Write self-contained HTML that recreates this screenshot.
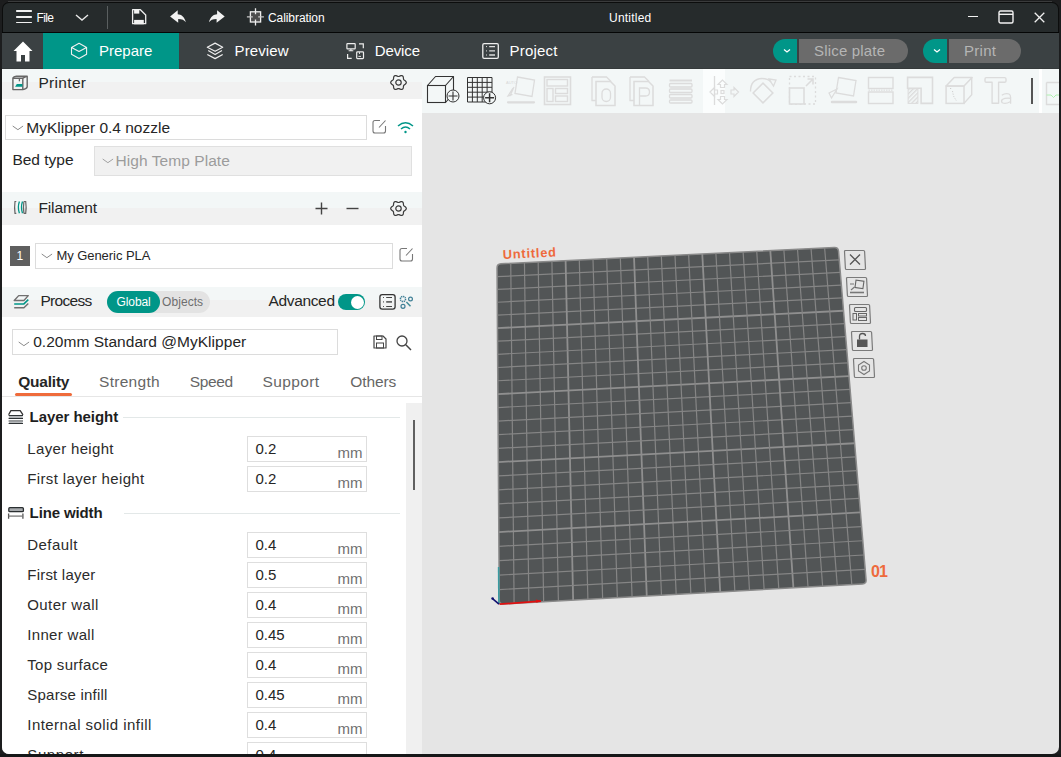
<!DOCTYPE html><html><head><meta charset="utf-8"><style>
html,body{margin:0;padding:0;width:1061px;height:757px;overflow:hidden;background:#1d1e1f;}
.t{position:absolute;white-space:nowrap;font-family:"Liberation Sans",sans-serif;}
.r{position:absolute;}
</style></head><body>
<div class="r" style="left:0.00px;top:0.00px;width:1061.00px;height:2.00px;background:#1c1d1e;"></div>
<div class="r" style="left:0.00px;top:754.00px;width:1061.00px;height:3.00px;background:#1c1d1e;"></div>
<div class="r" style="left:0.00px;top:0.00px;width:2.00px;height:757.00px;background:#1c1d1e;"></div>
<div class="r" style="left:1059.00px;top:0.00px;width:2.00px;height:757.00px;background:#1c1d1e;"></div>
<div class="r" style="left:2.00px;top:2.00px;width:1057.00px;height:752.00px;background:#0c0d0d;border-radius:7px;"></div>
<div class="r" style="left:2.00px;top:33.00px;width:1057.00px;height:721.00px;background:#e5e5e5;border-radius:0 0 7px 7px;"></div>
<div class="r" style="left:8.00px;top:1.00px;width:1044.00px;height:1.00px;background:#3a3b3c;"></div>
<div class="r" style="left:3.00px;top:3.00px;width:1055.00px;height:29.00px;background:#262b2c;border-radius:6px 6px 0 0;"></div>
<div class="r" style="left:2.00px;top:31.50px;width:1057.00px;height:1.50px;background:#050606;"></div>
<div class="r" style="left:2.00px;top:33.00px;width:1057.00px;height:36.00px;background:#3b4143;"></div>
<div class="r" style="left:2.00px;top:68.00px;width:1057.00px;height:1.00px;background:#353a3b;"></div>
<div class="r" style="left:16.00px;top:10.25px;width:16.00px;height:1.50px;background:#f0f0f0;border-radius:0.75px;"></div>
<div class="r" style="left:16.00px;top:16.25px;width:16.00px;height:1.50px;background:#f0f0f0;border-radius:0.75px;"></div>
<div class="r" style="left:16.00px;top:21.75px;width:16.00px;height:1.50px;background:#f0f0f0;border-radius:0.75px;"></div>
<div class="t" style="left:36.50px;top:11.84px;font-size:12.00px;line-height:12.00px;color:#ffffff;font-weight:400;letter-spacing:-0.612px;">File</div>
<svg class="r" style="left:75px;top:14px;" width="14" height="8" viewBox="0 0 14 8"><path d="M1 1 L7 6 L13 1" fill="none" stroke="#e8e8e8" stroke-width="1.4"/></svg>
<div class="r" style="left:107.00px;top:6.00px;width:1.00px;height:23.00px;background:#5a5f60;"></div>
<svg class="r" style="left:128px;top:6px" width="22" height="22" viewBox="128 6 22 22"><path d="M132.6 9.7 H140.4 L145.7 15 V23.7 H132.6 Z" fill="none" stroke="#eeeeee" stroke-width="1.3" stroke-linejoin="round"/><rect x="134.1" y="9.8" width="5.2" height="3.8" fill="#f2f2f2"/><rect x="134.1" y="19.9" width="9.7" height="4.4" fill="#f2f2f2"/></svg>
<svg class="r" style="left:168px;top:8px" width="20" height="17" viewBox="168 8 20 17"><path d="M170.1 16.6 L177.7 10.2 V14.2 C181 14.4 184.6 16.5 185.8 22.3 C184.5 20.2 182 19 178.2 19 V22.8 Z" fill="#f2f2f2"/></svg>
<svg class="r" style="left:206px;top:8px" width="20" height="17" viewBox="206 8 20 17"><path d="M224.7 16.6 L217.1 10.2 V14.2 C213.8 14.4 210.2 16.5 209 22.3 C210.3 20.2 212.8 19 216.6 19 V22.8 Z" fill="#f2f2f2"/></svg>
<svg class="r" style="left:245px;top:6px" width="22" height="22" viewBox="245 6 22 22"><rect x="250.4" y="11.8" width="10.2" height="10.2" fill="#4d4d4d" stroke="#eeeeee" stroke-width="1.3"/><path d="M255.5 8.3 V14.2 M255.5 19.6 V25.6" stroke="#eeeeee" stroke-width="1.3"/><path d="M246.9 16.9 H252.8 M258.2 16.9 H263.9" stroke="#c8c8c8" stroke-width="1.3"/></svg>
<div class="t" style="left:268.00px;top:11.84px;font-size:12.00px;line-height:12.00px;color:#ffffff;font-weight:400;letter-spacing:-0.076px;">Calibration</div>
<div class="t" style="left:609.00px;top:11.84px;font-size:12.00px;line-height:12.00px;color:#ffffff;font-weight:400;letter-spacing:0.216px;">Untitled</div>
<div class="r" style="left:968.00px;top:15.50px;width:10.00px;height:1.50px;background:#f2f2f2;"></div>
<svg class="r" style="left:998px;top:10px;" width="16" height="14" viewBox="0 0 16 14"><rect x="1" y="1" width="14" height="12" rx="1.5" fill="none" stroke="#f2f2f2" stroke-width="1.4"/><path d="M1 4.3 H15" stroke="#f2f2f2" stroke-width="1.4"/></svg>
<svg class="r" style="left:1034px;top:12px;" width="11" height="11" viewBox="0 0 11 11"><path d="M0.7 0.7 L10.3 10.3 M10.3 0.7 L0.7 10.3" stroke="#f0f0f0" stroke-width="1.3"/></svg>
<div class="r" style="left:43.00px;top:33.00px;width:136.00px;height:36.00px;background:#009688;"></div>
<svg class="r" style="left:13px;top:41px;" width="20" height="21" viewBox="0 0 20 21"><path d="M10 0.5 L19.5 10 H16.5 V20.5 H12 V14 H8 V20.5 H3.5 V10 H0.5 Z" fill="#ffffff"/></svg>
<svg class="r" style="left:68px;top:40px" width="22" height="22" viewBox="68 40 22 22"><path d="M79.05 43.3 L86.6 47.5 V54.25 L79.05 58.6 L71.5 54.25 V47.5 Z M71.5 47.5 L79.05 51.5 L86.6 47.5" fill="none" stroke="#f0f0f0" stroke-width="1.1" stroke-linejoin="round"/></svg>
<div class="t" style="left:99.00px;top:43.00px;font-size:15.00px;line-height:15.00px;color:#ffffff;font-weight:400;letter-spacing:-0.010px;">Prepare</div>
<svg class="r" style="left:204px;top:40px" width="22" height="22" viewBox="204 40 22 22"><path d="M215.1 43.1 L222.7 47.3 L215.1 51.3 L207.3 47.3 Z" fill="none" stroke="#eeeeee" stroke-width="1.2" stroke-linejoin="round"/><path d="M208.2 50.6 L215.1 54.6 L222 50.6 M207.3 54.5 L215.1 58.6 L222.7 54.5" fill="none" stroke="#eeeeee" stroke-width="1.2" stroke-linejoin="round"/></svg>
<div class="t" style="left:234.60px;top:43.20px;font-size:15.00px;line-height:15.00px;color:#ffffff;font-weight:400;letter-spacing:0.109px;">Preview</div>
<svg class="r" style="left:343px;top:40px" width="24" height="22" viewBox="343 40 24 22"><rect x="346.9" y="43.7" width="8.3" height="5.2" rx="0.6" fill="none" stroke="#eeeeee" stroke-width="1.2"/><path d="M350.9 49 V50.4 M348.6 50.7 H353.3" stroke="#eeeeee" stroke-width="1.1"/><path d="M359 43.8 H363.3 V48.2 M347.6 53.9 V58.4 H351.7" fill="none" stroke="#eeeeee" stroke-width="1.2"/><rect x="356.7" y="51.8" width="6.8" height="6.8" rx="0.8" fill="none" stroke="#eeeeee" stroke-width="1.2"/><path d="M359.5 52 V54 M358.4 56.4 H361" stroke="#dddddd" stroke-width="1"/></svg>
<div class="t" style="left:374.80px;top:43.20px;font-size:15.00px;line-height:15.00px;color:#ffffff;font-weight:400;letter-spacing:-0.130px;">Device</div>
<svg class="r" style="left:479px;top:40px" width="22" height="22" viewBox="479 40 22 22"><rect x="482.8" y="43.7" width="15.5" height="14.7" rx="1.3" fill="none" stroke="#eeeeee" stroke-width="1.3"/><path d="M489.2 46.6 H495 M489.2 50.9 H495 M489.2 55 H495" stroke="#dddddd" stroke-width="1.3"/><path d="M486.5 46.1 V47.1 M486.5 50.4 V51.4 M486.5 54.5 V55.5" stroke="#dddddd" stroke-width="1"/></svg>
<div class="t" style="left:509.50px;top:43.20px;font-size:15.00px;line-height:15.00px;color:#ffffff;font-weight:400;letter-spacing:0.203px;">Project</div>
<div class="r" style="left:773.00px;top:39.00px;width:24.00px;height:24.00px;background:#009688;border-radius:12px 0 0 12px;"></div>
<svg class="r" style="left:782px;top:47px;" width="10" height="8" viewBox="0 0 10 8"><path d="M2 2.5 L5 5 L8 2.5" fill="none" stroke="#ffffff" stroke-width="1.3"/></svg>
<div class="r" style="left:799.00px;top:39.00px;width:109.00px;height:24.00px;background:#6b6b6b;border-radius:0 12px 12px 0;"></div>
<div class="t" style="left:814.00px;top:43.30px;font-size:15.00px;line-height:15.00px;color:#b5b5b5;font-weight:400;letter-spacing:0.180px;">Slice plate</div>
<div class="r" style="left:923.00px;top:39.00px;width:24.00px;height:24.00px;background:#009688;border-radius:12px 0 0 12px;"></div>
<svg class="r" style="left:932px;top:47px;" width="10" height="8" viewBox="0 0 10 8"><path d="M2 2.5 L5 5 L8 2.5" fill="none" stroke="#ffffff" stroke-width="1.3"/></svg>
<div class="r" style="left:949.00px;top:39.00px;width:72.00px;height:24.00px;background:#6b6b6b;border-radius:0 12px 12px 0;"></div>
<div class="t" style="left:964.00px;top:43.30px;font-size:15.00px;line-height:15.00px;color:#b5b5b5;font-weight:400;letter-spacing:0.290px;">Print</div>
<div class="r" style="left:2.00px;top:69.00px;width:420.00px;height:685.00px;background:#ffffff;border-radius:0 0 0 7px;"></div>
<div class="r" style="left:2.00px;top:69.00px;width:420.00px;height:13.00px;background:#f3f7f7;"></div>
<div class="r" style="left:2.00px;top:82.00px;width:420.00px;height:17.00px;background:#f1f1f1;"></div>
<svg class="r" style="left:9px;top:72px" width="24" height="22" viewBox="9 72 24 22"><path d="M12.9 78.2 H22.8 V89.6 H12.9 Z" fill="none" stroke="#666" stroke-width="1.4" stroke-linejoin="round"/><path d="M12.9 78.2 Q13.5 76.3 16.3 76.2 H27.2 V86.8 Q26.8 88.8 22.8 89.6 M22.8 78.2 L27.2 76.2" fill="none" stroke="#666" stroke-width="1.4" stroke-linejoin="round"/><path d="M19.4 79 V81.3" stroke="#666" stroke-width="1.3"/><path d="M15.1 86.8 L16.8 84.1 H22.4 V86.8 Z" fill="#009688"/></svg>
<div class="t" style="left:38.40px;top:75.08px;font-size:15.50px;line-height:15.50px;color:#262626;font-weight:400;letter-spacing:0.325px;">Printer</div>
<svg class="r" style="left:390.4px;top:74.4px;" width="17" height="17" viewBox="0 0 17 17"><path d="M16.30 8.50 L16.15 7.83 L15.74 7.22 L15.16 6.71 L14.56 6.29 L14.05 5.91 L13.70 5.50 L13.51 4.99 L13.44 4.35 L13.38 3.62 L13.22 2.87 L12.90 2.21 L12.40 1.75 L11.75 1.54 L11.01 1.59 L10.29 1.84 L9.62 2.15 L9.03 2.40 L8.50 2.50 L7.97 2.40 L7.38 2.15 L6.71 1.84 L5.99 1.59 L5.25 1.54 L4.60 1.75 L4.10 2.21 L3.78 2.87 L3.62 3.62 L3.56 4.35 L3.49 4.99 L3.30 5.50 L2.95 5.91 L2.44 6.29 L1.84 6.71 L1.26 7.22 L0.85 7.83 L0.70 8.50 L0.85 9.17 L1.26 9.78 L1.84 10.29 L2.44 10.71 L2.95 11.09 L3.30 11.50 L3.49 12.01 L3.56 12.65 L3.62 13.38 L3.78 14.13 L4.10 14.79 L4.60 15.25 L5.25 15.46 L5.99 15.41 L6.71 15.16 L7.38 14.85 L7.97 14.60 L8.50 14.50 L9.03 14.60 L9.62 14.85 L10.29 15.16 L11.01 15.41 L11.75 15.46 L12.40 15.25 L12.90 14.79 L13.22 14.13 L13.38 13.38 L13.44 12.65 L13.51 12.01 L13.70 11.50 L14.05 11.09 L14.56 10.71 L15.16 10.29 L15.74 9.78 L16.15 9.17 L16.30 8.50 Z" fill="none" stroke="#3a3a3a" stroke-width="1.2" stroke-linejoin="round"/><circle cx="8.5" cy="8.5" r="2.7" fill="none" stroke="#3a3a3a" stroke-width="1.2"/></svg>
<div class="r" style="left:5.00px;top:115.00px;width:362.00px;height:25.00px;background:#ffffff;border:1px solid #dcdcdc;box-sizing:border-box;"></div>
<svg class="r" style="left:12px;top:125px;" width="12" height="6" viewBox="0 0 12 6"><path d="M0.7 1 L5.9 4.7 L11.1 1" fill="none" stroke="#8a8a8a" stroke-width="1"/></svg>
<div class="t" style="left:26.30px;top:120.28px;font-size:15.50px;line-height:15.50px;color:#262626;font-weight:400;letter-spacing:-0.009px;">MyKlipper 0.4 nozzle</div>
<svg class="r" style="left:372px;top:119.2px;" width="15" height="15" viewBox="0 0 15 15"><path d="M8 1.5 H3 Q1 1.5 1 3.5 V12 Q1 14 3 14 H11.5 Q13.5 14 13.5 12 V7" fill="none" stroke="#777" stroke-width="1.1"/><path d="M7 8.5 L13.5 1.5" stroke="#777" stroke-width="1.1"/></svg>
<svg class="r" style="left:397px;top:121px;" width="17" height="13" viewBox="0 0 17 13"><path d="M1 5 Q8.5 -1.5 16 5" fill="none" stroke="#009688" stroke-width="1.5"/><path d="M4 8 Q8.5 4 13 8" fill="none" stroke="#009688" stroke-width="1.5"/><circle cx="8.5" cy="11" r="1.2" fill="#009688"/></svg>
<div class="t" style="left:12.40px;top:151.88px;font-size:15.50px;line-height:15.50px;color:#262626;font-weight:400;letter-spacing:0.003px;">Bed type</div>
<div class="r" style="left:94.00px;top:146.00px;width:318.00px;height:30.00px;background:#f1f1f1;border:1px solid #e0e0e0;box-sizing:border-box;"></div>
<svg class="r" style="left:101.5px;top:158.3px;" width="12" height="6" viewBox="0 0 12 6"><path d="M0.7 1 L5.9 4.7 L11.1 1" fill="none" stroke="#a0a0a0" stroke-width="1"/></svg>
<div class="t" style="left:115.50px;top:153.08px;font-size:15.50px;line-height:15.50px;color:#9c9c9c;font-weight:400;letter-spacing:0.062px;">High Temp Plate</div>
<div class="r" style="left:2.00px;top:192.00px;width:420.00px;height:16.00px;background:#f3f7f7;"></div>
<div class="r" style="left:2.00px;top:208.00px;width:420.00px;height:17.00px;background:#f1f1f1;"></div>
<svg class="r" style="left:10px;top:198px" width="20" height="20" viewBox="10 198 20 20"><path d="M16.3 201.5 H15 Q14.2 207.5 15 213.3 H16.3 M23.9 201.5 H25.7 Q26.6 207.5 25.7 213.3 H23.9 M23.9 201.5 Q23 207.5 23.9 213.3" fill="none" stroke="#666" stroke-width="1.2"/><path d="M19.4 201.5 Q17.3 207.5 19.4 213.3 M22.5 201.5 Q20.4 207.5 22.5 213.3" fill="none" stroke="#009688" stroke-width="1.3"/></svg>
<div class="t" style="left:38.40px;top:200.38px;font-size:15.50px;line-height:15.50px;color:#262626;font-weight:400;letter-spacing:-0.119px;">Filament</div>
<svg class="r" style="left:315px;top:202px;" width="13" height="13" viewBox="0 0 13 13"><path d="M6.5 0.5 V12.5 M0.5 6.5 H12.5" stroke="#444" stroke-width="1.4"/></svg>
<svg class="r" style="left:346px;top:202px;" width="13" height="13" viewBox="0 0 13 13"><path d="M0.5 6.5 H12.5" stroke="#444" stroke-width="1.4"/></svg>
<svg class="r" style="left:390px;top:200px;" width="17" height="17" viewBox="0 0 17 17"><path d="M16.30 8.50 L16.15 7.83 L15.74 7.22 L15.16 6.71 L14.56 6.29 L14.05 5.91 L13.70 5.50 L13.51 4.99 L13.44 4.35 L13.38 3.62 L13.22 2.87 L12.90 2.21 L12.40 1.75 L11.75 1.54 L11.01 1.59 L10.29 1.84 L9.62 2.15 L9.03 2.40 L8.50 2.50 L7.97 2.40 L7.38 2.15 L6.71 1.84 L5.99 1.59 L5.25 1.54 L4.60 1.75 L4.10 2.21 L3.78 2.87 L3.62 3.62 L3.56 4.35 L3.49 4.99 L3.30 5.50 L2.95 5.91 L2.44 6.29 L1.84 6.71 L1.26 7.22 L0.85 7.83 L0.70 8.50 L0.85 9.17 L1.26 9.78 L1.84 10.29 L2.44 10.71 L2.95 11.09 L3.30 11.50 L3.49 12.01 L3.56 12.65 L3.62 13.38 L3.78 14.13 L4.10 14.79 L4.60 15.25 L5.25 15.46 L5.99 15.41 L6.71 15.16 L7.38 14.85 L7.97 14.60 L8.50 14.50 L9.03 14.60 L9.62 14.85 L10.29 15.16 L11.01 15.41 L11.75 15.46 L12.40 15.25 L12.90 14.79 L13.22 14.13 L13.38 13.38 L13.44 12.65 L13.51 12.01 L13.70 11.50 L14.05 11.09 L14.56 10.71 L15.16 10.29 L15.74 9.78 L16.15 9.17 L16.30 8.50 Z" fill="none" stroke="#3a3a3a" stroke-width="1.2" stroke-linejoin="round"/><circle cx="8.5" cy="8.5" r="2.7" fill="none" stroke="#3a3a3a" stroke-width="1.2"/></svg>
<div class="r" style="left:10.00px;top:246.00px;width:20.00px;height:20.00px;background:#5f5f5f;"></div>
<div class="t" style="left:16.50px;top:250.34px;font-size:12.00px;line-height:12.00px;color:#ffffff;font-weight:400;">1</div>
<div class="r" style="left:35.00px;top:243.00px;width:358.00px;height:26.00px;background:#ffffff;border:1px solid #dcdcdc;box-sizing:border-box;"></div>
<svg class="r" style="left:41px;top:253px;" width="12" height="6" viewBox="0 0 12 6"><path d="M0.7 1 L5.9 4.7 L11.1 1" fill="none" stroke="#8a8a8a" stroke-width="1"/></svg>
<div class="t" style="left:56.40px;top:248.80px;font-size:13.00px;line-height:13.00px;color:#262626;font-weight:400;letter-spacing:-0.049px;">My Generic PLA</div>
<svg class="r" style="left:399px;top:247px;" width="15" height="15" viewBox="0 0 15 15"><path d="M8 1.5 H3 Q1 1.5 1 3.5 V12 Q1 14 3 14 H11.5 Q13.5 14 13.5 12 V7" fill="none" stroke="#777" stroke-width="1.1"/><path d="M7 8.5 L13.5 1.5" stroke="#777" stroke-width="1.1"/></svg>
<div class="r" style="left:2.00px;top:287.00px;width:420.00px;height:13.00px;background:#f3f7f7;"></div>
<div class="r" style="left:2.00px;top:300.00px;width:420.00px;height:17.00px;background:#f1f1f1;"></div>
<svg class="r" style="left:10px;top:290px" width="22" height="22" viewBox="10 290 22 22"><path d="M18.7 295.6 H28.3 L23.9 300.5 H14.2 Z" fill="none" stroke="#707070" stroke-width="1.4" stroke-linejoin="round"/><path d="M14.2 303.9 H23.9 L28.3 299.6" fill="none" stroke="#009688" stroke-width="1.5"/><path d="M14.2 307.8 H23.9 L28.3 303.6" fill="none" stroke="#707070" stroke-width="1.4"/></svg>
<div class="t" style="left:40.40px;top:292.78px;font-size:15.50px;line-height:15.50px;color:#262626;font-weight:400;letter-spacing:-0.681px;">Process</div>
<div class="r" style="left:107.00px;top:291.00px;width:103.00px;height:22.00px;background:#e3e3e3;border-radius:11px;"></div>
<div class="r" style="left:107.00px;top:291.00px;width:53.00px;height:22.00px;background:#009688;border-radius:11px;"></div>
<div class="t" style="left:116.50px;top:296.34px;font-size:12.00px;line-height:12.00px;color:#ffffff;font-weight:400;letter-spacing:-0.097px;">Global</div>
<div class="t" style="left:162.10px;top:296.34px;font-size:12.00px;line-height:12.00px;color:#6e6e6e;font-weight:400;letter-spacing:0.053px;">Objects</div>
<div class="t" style="left:268.60px;top:292.78px;font-size:15.50px;line-height:15.50px;color:#262626;font-weight:400;letter-spacing:-0.362px;">Advanced</div>
<div class="r" style="left:338.00px;top:294.00px;width:27.00px;height:16.00px;background:#009688;border-radius:8px;"></div>
<div class="r" style="left:351px;top:295.5px;width:13px;height:13px;border-radius:50%;background:#fff;"></div>
<svg class="r" style="left:376px;top:291px" width="24" height="22" viewBox="376 291 24 22"><rect x="379.9" y="294.7" width="15.2" height="14.4" rx="2.3" fill="none" stroke="#333" stroke-width="1.3"/><path d="M386.2 297.5 H392 M386.2 306.5 H392" stroke="#444" stroke-width="1"/><path d="M386.2 301.9 H392" stroke="#555" stroke-width="1.6"/><path d="M383.5 297 V298 M383.5 301.3 V302.5 M383.5 306 V307" stroke="#555" stroke-width="1"/></svg>
<svg class="r" style="left:398px;top:293px" width="16" height="17" viewBox="398 293 16 17"><circle cx="403" cy="299" r="2.6" fill="none" stroke="#3f7f96" stroke-width="1.5" stroke-dasharray="1.3 0.7"/><circle cx="410.5" cy="299" r="1.9" fill="none" stroke="#3f7f96" stroke-width="1.2"/><circle cx="403" cy="306.3" r="2" fill="none" stroke="#3f7f96" stroke-width="1.2"/><path d="M406.4 302.1 L410.5 306.3" stroke="#3f8a96" stroke-width="1.5"/></svg>
<div class="r" style="left:12.00px;top:329.00px;width:326.00px;height:26.00px;background:#ffffff;border:1px solid #dcdcdc;box-sizing:border-box;"></div>
<svg class="r" style="left:18px;top:340.5px;" width="12" height="6" viewBox="0 0 12 6"><path d="M0.7 1 L5.9 4.7 L11.1 1" fill="none" stroke="#8a8a8a" stroke-width="1"/></svg>
<div class="t" style="left:33.20px;top:334.38px;font-size:15.50px;line-height:15.50px;color:#262626;font-weight:400;letter-spacing:0.034px;">0.20mm Standard @MyKlipper</div>
<svg class="r" style="left:373px;top:335px;" width="14" height="14" viewBox="0 0 14 14"><path d="M1 1 H10 L13 4 V13 H1 Z" fill="none" stroke="#444" stroke-width="1.2" stroke-linejoin="round"/><rect x="3.5" y="1" width="5.5" height="3.5" fill="none" stroke="#444" stroke-width="1"/><rect x="3.5" y="8" width="7" height="5" fill="none" stroke="#444" stroke-width="1"/></svg>
<svg class="r" style="left:396px;top:335px;" width="16" height="16" viewBox="0 0 16 16"><circle cx="6" cy="6" r="5" fill="none" stroke="#444" stroke-width="1.3"/><path d="M9.8 9.8 L15 15" stroke="#444" stroke-width="1.5"/></svg>
<div class="t" style="left:18.20px;top:374.28px;font-size:15.50px;line-height:15.50px;color:#262626;font-weight:700;letter-spacing:-0.206px;">Quality</div>
<div class="r" style="left:15.00px;top:393.00px;width:57.00px;height:3.00px;background:#ef6b3b;border-radius:1.5px;"></div>
<div class="t" style="left:99.00px;top:373.58px;font-size:15.50px;line-height:15.50px;color:#666666;font-weight:400;letter-spacing:0.287px;">Strength</div>
<div class="t" style="left:189.70px;top:373.58px;font-size:15.50px;line-height:15.50px;color:#666666;font-weight:400;letter-spacing:-0.329px;">Speed</div>
<div class="t" style="left:262.60px;top:373.58px;font-size:15.50px;line-height:15.50px;color:#666666;font-weight:400;letter-spacing:0.353px;">Support</div>
<div class="t" style="left:350.30px;top:373.58px;font-size:15.50px;line-height:15.50px;color:#666666;font-weight:400;letter-spacing:-0.122px;">Others</div>
<div class="r" style="left:2.00px;top:396.00px;width:420.00px;height:1.00px;background:#e6e6e6;"></div>
<div class="r" style="left:406.00px;top:403.00px;width:16.00px;height:351.00px;background:#f0f0f0;"></div>
<div class="r" style="left:413.00px;top:420.00px;width:2.00px;height:70.00px;background:#606060;"></div>
<div class="t" style="left:29.60px;top:409.10px;font-size:15.00px;line-height:15.00px;color:#1e1e1e;font-weight:700;letter-spacing:-0.053px;">Layer height</div>
<svg class="r" style="left:5px;top:405.8px" width="22" height="20" viewBox="5 405.8 22 20"><path d="M8.6 414.6 L10.9 410.4 H20.2 L23 414.6" fill="none" stroke="#333" stroke-width="1.3" stroke-linejoin="round"/><path d="M8.6 415.3 H23 M8.6 418.1 H23 M8.6 420.8 H23 M8.6 423.3 H23" stroke="#2f3436" stroke-width="1.2"/><path d="M9 416.7 H22.6 M9 422 H22.6" stroke="#9ea2a5" stroke-width="1.2"/></svg>
<div class="r" style="left:123.00px;top:417.00px;width:277.00px;height:1.00px;background:#e3e8e8;"></div>
<div class="t" style="left:29.60px;top:505.10px;font-size:15.00px;line-height:15.00px;color:#1e1e1e;font-weight:700;letter-spacing:-0.128px;">Line width</div>
<svg class="r" style="left:5px;top:501.79999999999995px" width="22" height="20" viewBox="5 501.79999999999995 22 20"><rect x="8.8" y="507.5" width="14.6" height="4" rx="1" fill="#a7aaad" stroke="#2a2f31" stroke-width="1.3"/><path d="M8.6 513.4 V518.6 M22.9 513.4 V518.6" stroke="#555" stroke-width="1.3"/><path d="M8.6 515.9 H22.9" stroke="#7a7a7a" stroke-width="1.3"/></svg>
<div class="r" style="left:124.00px;top:513.00px;width:276.00px;height:1.00px;background:#e3e8e8;"></div>
<div class="t" style="left:27.30px;top:441.30px;font-size:15.00px;line-height:15.00px;color:#2b2b2b;font-weight:400;letter-spacing:0.332px;">Layer height</div>
<div class="r" style="left:247.00px;top:436.00px;width:120.00px;height:26.00px;background:#ffffff;border:1px solid #dedede;box-sizing:border-box;"></div>
<div class="t" style="left:255.50px;top:441.30px;font-size:15.00px;line-height:15.00px;color:#262626;font-weight:400;">0.2</div>
<div class="t" style="left:337.40px;top:445.30px;font-size:15.00px;line-height:15.00px;color:#707070;font-weight:400;letter-spacing:0.011px;">mm</div>
<div class="t" style="left:27.30px;top:471.30px;font-size:15.00px;line-height:15.00px;color:#2b2b2b;font-weight:400;letter-spacing:0.355px;">First layer height</div>
<div class="r" style="left:247.00px;top:466.00px;width:120.00px;height:26.00px;background:#ffffff;border:1px solid #dedede;box-sizing:border-box;"></div>
<div class="t" style="left:255.50px;top:471.30px;font-size:15.00px;line-height:15.00px;color:#262626;font-weight:400;">0.2</div>
<div class="t" style="left:337.40px;top:475.30px;font-size:15.00px;line-height:15.00px;color:#707070;font-weight:400;letter-spacing:0.011px;">mm</div>
<div class="t" style="left:27.30px;top:537.30px;font-size:15.00px;line-height:15.00px;color:#2b2b2b;font-weight:400;letter-spacing:0.413px;">Default</div>
<div class="r" style="left:247.00px;top:532.00px;width:120.00px;height:26.00px;background:#ffffff;border:1px solid #dedede;box-sizing:border-box;"></div>
<div class="t" style="left:255.50px;top:537.30px;font-size:15.00px;line-height:15.00px;color:#262626;font-weight:400;">0.4</div>
<div class="t" style="left:337.40px;top:541.30px;font-size:15.00px;line-height:15.00px;color:#707070;font-weight:400;letter-spacing:0.011px;">mm</div>
<div class="t" style="left:27.30px;top:567.30px;font-size:15.00px;line-height:15.00px;color:#2b2b2b;font-weight:400;letter-spacing:0.207px;">First layer</div>
<div class="r" style="left:247.00px;top:562.00px;width:120.00px;height:26.00px;background:#ffffff;border:1px solid #dedede;box-sizing:border-box;"></div>
<div class="t" style="left:255.50px;top:567.30px;font-size:15.00px;line-height:15.00px;color:#262626;font-weight:400;">0.5</div>
<div class="t" style="left:337.40px;top:571.30px;font-size:15.00px;line-height:15.00px;color:#707070;font-weight:400;letter-spacing:0.011px;">mm</div>
<div class="t" style="left:27.30px;top:597.30px;font-size:15.00px;line-height:15.00px;color:#2b2b2b;font-weight:400;letter-spacing:0.398px;">Outer wall</div>
<div class="r" style="left:247.00px;top:592.00px;width:120.00px;height:26.00px;background:#ffffff;border:1px solid #dedede;box-sizing:border-box;"></div>
<div class="t" style="left:255.50px;top:597.30px;font-size:15.00px;line-height:15.00px;color:#262626;font-weight:400;">0.4</div>
<div class="t" style="left:337.40px;top:601.30px;font-size:15.00px;line-height:15.00px;color:#707070;font-weight:400;letter-spacing:0.011px;">mm</div>
<div class="t" style="left:27.30px;top:627.30px;font-size:15.00px;line-height:15.00px;color:#2b2b2b;font-weight:400;letter-spacing:0.312px;">Inner wall</div>
<div class="r" style="left:247.00px;top:622.00px;width:120.00px;height:26.00px;background:#ffffff;border:1px solid #dedede;box-sizing:border-box;"></div>
<div class="t" style="left:255.50px;top:627.30px;font-size:15.00px;line-height:15.00px;color:#262626;font-weight:400;">0.45</div>
<div class="t" style="left:337.40px;top:631.30px;font-size:15.00px;line-height:15.00px;color:#707070;font-weight:400;letter-spacing:0.011px;">mm</div>
<div class="t" style="left:27.30px;top:657.30px;font-size:15.00px;line-height:15.00px;color:#2b2b2b;font-weight:400;letter-spacing:0.296px;">Top surface</div>
<div class="r" style="left:247.00px;top:652.00px;width:120.00px;height:26.00px;background:#ffffff;border:1px solid #dedede;box-sizing:border-box;"></div>
<div class="t" style="left:255.50px;top:657.30px;font-size:15.00px;line-height:15.00px;color:#262626;font-weight:400;">0.4</div>
<div class="t" style="left:337.40px;top:661.30px;font-size:15.00px;line-height:15.00px;color:#707070;font-weight:400;letter-spacing:0.011px;">mm</div>
<div class="t" style="left:27.30px;top:687.30px;font-size:15.00px;line-height:15.00px;color:#2b2b2b;font-weight:400;letter-spacing:0.214px;">Sparse infill</div>
<div class="r" style="left:247.00px;top:682.00px;width:120.00px;height:26.00px;background:#ffffff;border:1px solid #dedede;box-sizing:border-box;"></div>
<div class="t" style="left:255.50px;top:687.30px;font-size:15.00px;line-height:15.00px;color:#262626;font-weight:400;">0.45</div>
<div class="t" style="left:337.40px;top:691.30px;font-size:15.00px;line-height:15.00px;color:#707070;font-weight:400;letter-spacing:0.011px;">mm</div>
<div class="t" style="left:27.30px;top:717.30px;font-size:15.00px;line-height:15.00px;color:#2b2b2b;font-weight:400;letter-spacing:0.448px;">Internal solid infill</div>
<div class="r" style="left:247.00px;top:712.00px;width:120.00px;height:26.00px;background:#ffffff;border:1px solid #dedede;box-sizing:border-box;"></div>
<div class="t" style="left:255.50px;top:717.30px;font-size:15.00px;line-height:15.00px;color:#262626;font-weight:400;">0.4</div>
<div class="t" style="left:337.40px;top:721.30px;font-size:15.00px;line-height:15.00px;color:#707070;font-weight:400;letter-spacing:0.011px;">mm</div>
<div class="t" style="left:27.30px;top:747.30px;font-size:15.00px;line-height:15.00px;color:#2b2b2b;font-weight:400;letter-spacing:0.578px;">Support</div>
<div class="r" style="left:247.00px;top:742.00px;width:120.00px;height:26.00px;background:#ffffff;border:1px solid #dedede;box-sizing:border-box;"></div>
<div class="t" style="left:255.50px;top:747.30px;font-size:15.00px;line-height:15.00px;color:#262626;font-weight:400;">0.4</div>
<div class="t" style="left:337.40px;top:751.30px;font-size:15.00px;line-height:15.00px;color:#707070;font-weight:400;letter-spacing:0.011px;">mm</div>
<div class="r" style="left:422.00px;top:69.00px;width:617.00px;height:44.00px;background:#f3f7f7;"></div>
<div class="r" style="left:1039.00px;top:69.00px;width:3.00px;height:44.00px;background:#ffffff;"></div>
<div class="r" style="left:1042.00px;top:69.00px;width:17.00px;height:44.00px;background:#f3f7f7;"></div>
<div class="r" style="left:703.00px;top:69.00px;width:22.00px;height:44.00px;background:#fbfdfd;"></div>
<svg class="r" style="left:422px;top:72px" width="40" height="38" viewBox="422 72 40 38"><path d="M427.5 85.5 L435.5 76.5 H453.5 L445.5 85.5 Z" fill="none" stroke="#333" stroke-width="1.1" stroke-linejoin="round"/><rect x="427.5" y="85.5" width="18" height="17" fill="none" stroke="#333" stroke-width="1.1"/><path d="M445.5 102.5 L449 98.5 M453.5 76.5 V90" fill="none" stroke="#333" stroke-width="1.1"/><circle cx="453" cy="96" r="6" fill="#f3f7f7" stroke="#333" stroke-width="1"/><path d="M453 91.5 V100.5 M448.5 96 H457.5" stroke="#333" stroke-width="1.1"/></svg>
<svg class="r" style="left:462px;top:72px" width="38" height="38" viewBox="462 72 38 38"><path d="M467.5 77.5 V102" stroke="#333" stroke-width="1"/><path d="M472.4 77.5 V102" stroke="#333" stroke-width="1"/><path d="M477.3 77.5 V102" stroke="#333" stroke-width="1"/><path d="M482.2 77.5 V102" stroke="#333" stroke-width="1"/><path d="M487.1 77.5 V102" stroke="#333" stroke-width="1"/><path d="M492.0 77.5 V102" stroke="#333" stroke-width="1"/><path d="M467.5 77.5 H492" stroke="#333" stroke-width="1"/><path d="M467.5 82.4 H492" stroke="#333" stroke-width="1"/><path d="M467.5 87.3 H492" stroke="#333" stroke-width="1"/><path d="M467.5 92.2 H492" stroke="#333" stroke-width="1"/><path d="M467.5 97.1 H492" stroke="#333" stroke-width="1"/><path d="M467.5 102.0 H492" stroke="#333" stroke-width="1"/><circle cx="489.6" cy="97.8" r="6" fill="#f3f7f7" stroke="#333" stroke-width="1"/><path d="M489.6 93.3 V102.3 M485.1 97.8 H494.1" stroke="#333" stroke-width="1.5"/></svg>
<svg class="r" style="left:504px;top:74px;" width="34" height="34" viewBox="0 0 34 34"><path d="M13.5 3 L30.5 6 L28 22.5 L11 19.5 Z" fill="none" stroke="#dcdcdc" stroke-width="1.3"/><path d="M4 28.3 H30" stroke="#dcdcdc" stroke-width="2.2" stroke-linecap="round"/><path d="M9 14 L4 22 L8.5 20.5 M10 13 L6 22" fill="none" stroke="#dcdcdc" stroke-width="1.2"/><text x="2" y="10" font-size="4" fill="#d8d8d8" font-family="Liberation Sans">AUTO</text></svg>
<svg class="r" style="left:543px;top:75px;" width="30" height="32" viewBox="0 0 30 32"><rect x="1.5" y="2" width="26" height="27.5" fill="none" stroke="#dcdcdc" stroke-width="1.6"/><rect x="4" y="4.5" width="20.5" height="6.5" fill="none" stroke="#dcdcdc" stroke-width="1.4"/><rect x="4" y="13.5" width="6" height="13" fill="none" stroke="#dcdcdc" stroke-width="1.4"/><rect x="12.5" y="13.5" width="12" height="5" fill="none" stroke="#dcdcdc" stroke-width="1.4"/><rect x="12.5" y="21" width="12" height="5.5" fill="none" stroke="#dcdcdc" stroke-width="1.4"/></svg>
<svg class="r" style="left:591px;top:76px;" width="26" height="31" viewBox="0 0 26 31"><path d="M1 1 H15.5 L20 5.5" fill="none" stroke="#dcdcdc" stroke-width="1.3"/><path d="M1 1 V24.5 H5" fill="none" stroke="#dcdcdc" stroke-width="1.3"/><path d="M5 5.5 H19.5 L24 10 V29.5 H5 Z" fill="none" stroke="#dcdcdc" stroke-width="1.5"/><rect x="11" y="13" width="8.5" height="12.5" rx="4.2" fill="none" stroke="#dcdcdc" stroke-width="1.3"/></svg>
<svg class="r" style="left:629px;top:76px;" width="26" height="31" viewBox="0 0 26 31"><path d="M1 1 H15.5 L20 5.5" fill="none" stroke="#dcdcdc" stroke-width="1.3"/><path d="M1 1 V24.5 H5" fill="none" stroke="#dcdcdc" stroke-width="1.3"/><path d="M5 5.5 H19.5 L24 10 V29.5 H5 Z" fill="none" stroke="#dcdcdc" stroke-width="1.5"/><path d="M10.5 29 V12 H16.5 Q20.5 12 20.5 16 Q20.5 20 16.5 20 H10.5" fill="none" stroke="#dcdcdc" stroke-width="1.3"/></svg>
<svg class="r" style="left:668px;top:79px;" width="26" height="25" viewBox="0 0 26 25"><path d="M1.5 1.5 H24" stroke="#dcdcdc" stroke-width="2"/><rect x="1.5" y="4.5" width="22.5" height="3.5" rx="1" fill="none" stroke="#dcdcdc" stroke-width="1.3"/><rect x="1.5" y="10" width="22.5" height="3.5" rx="1" fill="none" stroke="#dcdcdc" stroke-width="1.3"/><rect x="1.5" y="15.5" width="22.5" height="3.5" rx="1" fill="none" stroke="#dcdcdc" stroke-width="1.3"/><rect x="1.5" y="21" width="22.5" height="3" rx="1" fill="none" stroke="#dcdcdc" stroke-width="1.3"/></svg>
<svg class="r" style="left:708px;top:74px;" width="33" height="33" viewBox="0 0 33 33"><path d="M6.5 2 V31" stroke="#dcdcdc" stroke-width="1.3"/><path d="M14.5 6 L10 10.5 H12.5 V13.5 H16.5 V10.5 H19 Z" fill="none" stroke="#dcdcdc" stroke-width="1.2"/><path d="M14.5 30 L10 25.5 H12.5 V22.5 H16.5 V25.5 H19 Z" fill="none" stroke="#dcdcdc" stroke-width="1.2"/><path d="M30.5 18 L26 13.5 V16 H23 V20 H26 V22.5 Z" fill="none" stroke="#dcdcdc" stroke-width="1.2"/><path d="M2 18 L6.5 13.5 V16 H9.5 V20 H6.5 V22.5 Z" fill="none" stroke="#dcdcdc" stroke-width="1.2"/><rect x="13" y="16.5" width="3" height="3" fill="none" stroke="#dcdcdc" stroke-width="1.2"/></svg>
<svg class="r" style="left:748px;top:76px;" width="31" height="31" viewBox="0 0 31 31"><rect x="8" y="10" width="14" height="14" transform="rotate(45 15 17)" fill="none" stroke="#dcdcdc" stroke-width="1.5"/><path d="M2.5 15.5 Q2.5 3 14 2.5 Q20 2.5 23 6" fill="none" stroke="#dcdcdc" stroke-width="1.4"/><path d="M21 3 L28 4 L25.5 10 Z" fill="none" stroke="#dcdcdc" stroke-width="1.3"/></svg>
<svg class="r" style="left:788px;top:75px;" width="30" height="32" viewBox="0 0 30 32"><rect x="1.5" y="1.5" width="26" height="27.5" fill="none" stroke="#dcdcdc" stroke-width="1.3" stroke-dasharray="2 2.5"/><rect x="1.5" y="13" width="14.5" height="16" fill="#f3f7f7" stroke="#dcdcdc" stroke-width="1.6"/><path d="M18 11 L25 4 M19.5 4 H25 V9.5" fill="none" stroke="#dcdcdc" stroke-width="1.6"/></svg>
<svg class="r" style="left:826px;top:76px;" width="32" height="30" viewBox="0 0 32 30"><path d="M12.5 1.5 L30 4.5 L27.5 20 L10 17 Z" fill="none" stroke="#dcdcdc" stroke-width="1.3"/><path d="M6 26 H30" stroke="#dcdcdc" stroke-width="2.5" stroke-linecap="round"/><path d="M11 13 L3 17 L5.5 22 Z" fill="none" stroke="#dcdcdc" stroke-width="1.2"/></svg>
<svg class="r" style="left:867px;top:76px;" width="28" height="30" viewBox="0 0 28 30"><rect x="1.5" y="1.5" width="24.5" height="11" fill="none" stroke="#dcdcdc" stroke-width="1.4"/><rect x="1.5" y="16" width="24.5" height="11.5" fill="none" stroke="#dcdcdc" stroke-width="1.4"/><path d="M1.5 14.2 H26" stroke="#dcdcdc" stroke-width="1" stroke-dasharray="1.5 1"/></svg>
<svg class="r" style="left:904px;top:74px" width="32" height="32" viewBox="904 74 32 32"><defs><pattern id="hatch" width="3" height="3" patternUnits="userSpaceOnUse" patternTransform="rotate(45)"><rect width="3" height="3" fill="#f3f7f7"/><rect width="1.3" height="3" fill="#dadada"/></pattern></defs><path d="M907.6 77.4 H932.5 V103.4 H921.1 V88.3 H907.6 Z" fill="none" stroke="#dcdcdc" stroke-width="1.6"/><rect x="908.1" y="88.8" width="9.8" height="14.6" fill="url(#hatch)" stroke="#dcdcdc" stroke-width="1"/></svg>
<svg class="r" style="left:942px;top:74px" width="34" height="32" viewBox="942 74 34 32"><path d="M946.1 86.1 L954.2 77.4 H972.1 L964 86.1 Z" fill="none" stroke="#dcdcdc" stroke-width="1.5" stroke-linejoin="round"/><rect x="946.1" y="86.1" width="17.9" height="17.3" fill="none" stroke="#dcdcdc" stroke-width="1.5"/><path d="M964 103.4 L971.7 94.8 V77.4" fill="none" stroke="#dcdcdc" stroke-width="1.4"/><path d="M950 88.5 H952 M952.5 91 L953.5 96 L956.5 101" fill="none" stroke="#cfcfcf" stroke-width="1" stroke-dasharray="1.2 1.4"/></svg>
<svg class="r" style="left:982px;top:74px" width="32" height="32" viewBox="982 74 32 32"><path d="M986.2 77.6 H1004.6 Q1006 77.6 1006 79 V81.1 Q1006 82.3 1004.6 82.3 H998.6 V103.2 H992.1 V82.3 H986.2 Q985 82.3 985 81 V79 Q985 77.6 986.2 77.6 Z" fill="none" stroke="#dcdcdc" stroke-width="1.4" stroke-linejoin="round"/><path d="M1001.8 95.2 Q1005.5 92.8 1009 94 Q1010.6 94.8 1010.6 97.5 V103.8 M1010.6 98.3 Q1005 97.8 1002.3 99.5 Q1000.8 101.2 1002.3 102.8 Q1005.5 104.5 1010.2 101.8" fill="none" stroke="#dcdcdc" stroke-width="1.3"/></svg>
<div class="r" style="left:1031.00px;top:78.00px;width:1.60px;height:26.00px;background:#555555;"></div>
<svg class="r" style="left:1045px;top:81px;" width="14" height="25" viewBox="0 0 14 25"><path d="M1.5 1.5 H14 M1.5 1.5 V23.5 H14" fill="none" stroke="#dcdcdc" stroke-width="1.4"/><path d="M1.5 14 H6 L8.5 16.5 L11 14 H14" fill="none" stroke="#b0f0b0" stroke-width="1"/></svg>
<svg class="r" style="left:0;top:0" width="1061" height="757" viewBox="0 0 1061 757"><path d="M497.03 268.00 Q497.00 264.00 501.00 263.80 L834.20 247.50 Q838.20 247.30 838.53 251.29 L866.07 579.81 Q866.40 583.80 862.41 584.02 L503.29 603.98 Q499.30 604.20 499.27 600.20 Z" fill="#525556" stroke="#8a8a8a" stroke-width="1.5" stroke-linejoin="round"/><path d="M510.74 263.33 L514.09 603.38" stroke="#858585" stroke-width="1.2"/><path d="M497.09 276.68 L839.25 259.85" stroke="#858585" stroke-width="1.2"/><path d="M524.46 262.66 L528.86 602.56" stroke="#858585" stroke-width="1.2"/><path d="M497.17 289.43 L840.31 272.46" stroke="#858585" stroke-width="1.2"/><path d="M538.18 261.98 L543.63 601.74" stroke="#858585" stroke-width="1.2"/><path d="M497.26 302.25 L841.37 285.15" stroke="#858585" stroke-width="1.2"/><path d="M551.90 261.31 L558.39 600.92" stroke="#858585" stroke-width="1.2"/><path d="M497.35 315.15 L842.44 297.91" stroke="#858585" stroke-width="1.2"/><path d="M565.60 260.64 L573.14 600.10" stroke="#8f8f8f" stroke-width="1.8"/><path d="M497.43 328.12 L843.52 310.74" stroke="#8f8f8f" stroke-width="1.8"/><path d="M579.30 259.97 L587.89 599.28" stroke="#858585" stroke-width="1.2"/><path d="M497.52 341.16 L844.60 323.65" stroke="#858585" stroke-width="1.2"/><path d="M593.00 259.30 L602.62 598.46" stroke="#858585" stroke-width="1.2"/><path d="M497.61 354.28 L845.69 336.63" stroke="#858585" stroke-width="1.2"/><path d="M606.68 258.63 L617.35 597.64" stroke="#858585" stroke-width="1.2"/><path d="M497.70 367.48 L846.78 349.69" stroke="#858585" stroke-width="1.2"/><path d="M620.36 257.96 L632.06 596.82" stroke="#858585" stroke-width="1.2"/><path d="M497.79 380.76 L847.88 362.82" stroke="#858585" stroke-width="1.2"/><path d="M634.03 257.29 L646.77 596.00" stroke="#8f8f8f" stroke-width="1.8"/><path d="M497.88 394.11 L848.99 376.03" stroke="#8f8f8f" stroke-width="1.8"/><path d="M647.69 256.62 L661.47 595.19" stroke="#858585" stroke-width="1.2"/><path d="M497.97 407.54 L850.10 389.32" stroke="#858585" stroke-width="1.2"/><path d="M661.34 255.96 L676.17 594.37" stroke="#858585" stroke-width="1.2"/><path d="M498.06 421.05 L851.22 402.68" stroke="#858585" stroke-width="1.2"/><path d="M674.99 255.29 L690.85 593.56" stroke="#858585" stroke-width="1.2"/><path d="M498.15 434.64 L852.35 416.12" stroke="#858585" stroke-width="1.2"/><path d="M688.63 254.62 L705.52 592.74" stroke="#858585" stroke-width="1.2"/><path d="M498.25 448.31 L853.48 429.65" stroke="#858585" stroke-width="1.2"/><path d="M702.27 253.95 L720.19 591.92" stroke="#8f8f8f" stroke-width="1.8"/><path d="M498.34 462.06 L854.62 443.25" stroke="#8f8f8f" stroke-width="1.8"/><path d="M715.89 253.29 L734.85 591.11" stroke="#858585" stroke-width="1.2"/><path d="M498.43 475.89 L855.77 456.93" stroke="#858585" stroke-width="1.2"/><path d="M729.51 252.62 L749.50 590.30" stroke="#858585" stroke-width="1.2"/><path d="M498.53 489.81 L856.92 470.69" stroke="#858585" stroke-width="1.2"/><path d="M743.12 251.95 L764.14 589.48" stroke="#858585" stroke-width="1.2"/><path d="M498.62 503.81 L858.08 484.53" stroke="#858585" stroke-width="1.2"/><path d="M756.73 251.29 L778.78 588.67" stroke="#858585" stroke-width="1.2"/><path d="M498.72 517.89 L859.25 498.46" stroke="#858585" stroke-width="1.2"/><path d="M770.32 250.62 L793.40 587.86" stroke="#8f8f8f" stroke-width="1.8"/><path d="M498.81 532.06 L860.42 512.47" stroke="#8f8f8f" stroke-width="1.8"/><path d="M783.91 249.96 L808.02 587.04" stroke="#858585" stroke-width="1.2"/><path d="M498.91 546.31 L861.60 526.57" stroke="#858585" stroke-width="1.2"/><path d="M797.50 249.29 L822.63 586.23" stroke="#858585" stroke-width="1.2"/><path d="M499.01 560.65 L862.79 540.75" stroke="#858585" stroke-width="1.2"/><path d="M811.07 248.63 L837.23 585.42" stroke="#858585" stroke-width="1.2"/><path d="M499.10 575.08 L863.99 555.01" stroke="#858585" stroke-width="1.2"/><path d="M824.64 247.96 L851.82 584.61" stroke="#858585" stroke-width="1.2"/><path d="M499.20 589.60 L865.19 569.36" stroke="#858585" stroke-width="1.2"/><path d="M498.6 567 L498.9 604" stroke="#3a9aa0" stroke-width="1.6"/><path d="M499.5 604.2 L541 601.2" stroke="#e01010" stroke-width="1.7"/><path d="M536 599.6 L541.5 601.1 L536.3 602.8 Z" fill="#e01010"/><path d="M499 604.2 L492.5 598.6" stroke="#101070" stroke-width="1.6"/><circle cx="492.6" cy="598.5" r="1.3" fill="#101070"/></svg>
<div class="t" style="left:503.30px;top:249.46px;font-size:12.80px;line-height:12.80px;color:#ee6a3c;font-weight:700;letter-spacing:0.809px;transform:rotate(-2.8deg);transform-origin:0 85%;">Untitled</div>
<div class="t" style="left:871.00px;top:563.66px;font-size:16.00px;line-height:16.00px;color:#ee6a3c;font-weight:700;letter-spacing:-0.795px;">01</div>
<svg class="r" style="left:843px;top:249px;" width="24" height="22" viewBox="0 0 24 22"><path d="M2.5 1.5 H20.5 Q21.5 1.5 21.6 2.5 L22.5 19.5 Q22.5 20.5 21.5 20.5 H3.5 Q2.5 20.5 2.4 19.5 L1.5 2.5 Q1.5 1.5 2.5 1.5 Z" fill="none" stroke="#7a7a7a" stroke-width="1.2"/><path d="M7 5.5 L17 15.5 M17 5.5 L7 15.5" stroke="#555" stroke-width="1.3"/></svg>
<svg class="r" style="left:845px;top:276px;" width="24" height="22" viewBox="0 0 24 22"><path d="M2.5 1.5 H20.5 Q21.5 1.5 21.6 2.5 L22.5 19.5 Q22.5 20.5 21.5 20.5 H3.5 Q2.5 20.5 2.4 19.5 L1.5 2.5 Q1.5 1.5 2.5 1.5 Z" fill="none" stroke="#7a7a7a" stroke-width="1.2"/><rect x="10.5" y="4.5" width="8" height="7.5" transform="rotate(8 14 8)" fill="none" stroke="#666" stroke-width="1.1"/><path d="M5 8 H9 M6 14 L9.5 11" stroke="#777" stroke-width="1.1"/><path d="M5 16.5 H19" stroke="#777" stroke-width="1.6"/></svg>
<svg class="r" style="left:847.5px;top:303px;" width="24" height="22" viewBox="0 0 24 22"><path d="M2.5 1.5 H20.5 Q21.5 1.5 21.6 2.5 L22.5 19.5 Q22.5 20.5 21.5 20.5 H3.5 Q2.5 20.5 2.4 19.5 L1.5 2.5 Q1.5 1.5 2.5 1.5 Z" fill="none" stroke="#7a7a7a" stroke-width="1.2"/><rect x="6.5" y="4.5" width="12" height="4" rx="1" fill="none" stroke="#666" stroke-width="1.1"/><rect x="5" y="10.5" width="3.5" height="6.5" fill="none" stroke="#666" stroke-width="1"/><rect x="10.5" y="10.5" width="8" height="2.5" fill="none" stroke="#666" stroke-width="1"/><rect x="10.5" y="14.5" width="8" height="3" fill="none" stroke="#666" stroke-width="1"/></svg>
<svg class="r" style="left:850px;top:330px;" width="24" height="22" viewBox="0 0 24 22"><path d="M2.5 1.5 H20.5 Q21.5 1.5 21.6 2.5 L22.5 19.5 Q22.5 20.5 21.5 20.5 H3.5 Q2.5 20.5 2.4 19.5 L1.5 2.5 Q1.5 1.5 2.5 1.5 Z" fill="none" stroke="#7a7a7a" stroke-width="1.2"/><path d="M9.5 9.5 V6.5 Q9.5 3.5 12.5 3.5 Q15.5 3.5 15.5 6" fill="none" stroke="#555" stroke-width="1.3"/><rect x="7" y="9.5" width="10.5" height="7.5" fill="#555"/></svg>
<svg class="r" style="left:852px;top:357px;" width="24" height="22" viewBox="0 0 24 22"><path d="M2.5 1.5 H20.5 Q21.5 1.5 21.6 2.5 L22.5 19.5 Q22.5 20.5 21.5 20.5 H3.5 Q2.5 20.5 2.4 19.5 L1.5 2.5 Q1.5 1.5 2.5 1.5 Z" fill="none" stroke="#7a7a7a" stroke-width="1.2"/><path d="M12 4.5 L17.5 8 V14 L12 17.5 L6.5 14 V8 Z" fill="none" stroke="#777" stroke-width="1.1"/><circle cx="12" cy="11" r="2.3" fill="none" stroke="#777" stroke-width="1.1"/></svg>
<div class="r" style="left:0.00px;top:754.00px;width:1061.00px;height:3.00px;background:#161718;"></div>
</body></html>
